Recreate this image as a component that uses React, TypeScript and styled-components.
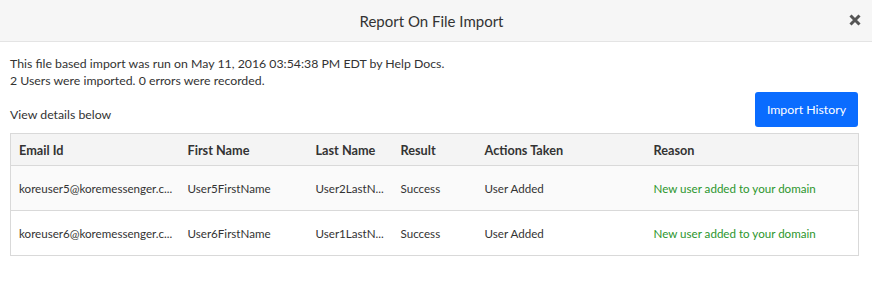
import styled, { createGlobalStyle } from "styled-components";

const GlobalStyle = createGlobalStyle`
  body {
    margin: 0;
    background: #fff;
    font-family: Lato, "Open Sans", sans-serif;
    color: #333;
  }
`;

const Modal = styled.div`
  width: 872px;
  height: 290px;
  background: #fff;
`;

const Header = styled.div`
  position: relative;
  height: 41px;
  background: #f6f6f6;
  border-bottom: 1px solid #e4e4e4;
  display: flex;
  align-items: center;
  justify-content: center;
`;

const Title = styled.div`
  font-size: 15px;
  color: #333;
  padding-right: 9px;
`;

const Close = styled.button`
  position: absolute;
  right: 10px;
  top: 13px;
  width: 14px;
  height: 14px;
  border: 0;
  padding: 0;
  background: none;
  cursor: pointer;
`;

const Body = styled.div`
  padding: 13px 14px 0 10px;
  font-size: 12.3px;
`;

const Info = styled.div`
  line-height: 17px;
`;

const Toolbar = styled.div`
  display: flex;
  justify-content: space-between;
  align-items: flex-end;
  margin-top: 3px;
`;

const Label = styled.div`
  line-height: 17px;
  padding-bottom: 4px;
`;

const Button = styled.button`
  background: #0a6cff;
  color: #fff;
  border: 0;
  border-radius: 3px;
  font-family: inherit;
  font-size: 12.3px;
  height: 35px;
  padding: 0 12px;
`;

const Table = styled.table`
  margin-top: 6px;
  width: 848px;
  border-collapse: collapse;
  table-layout: fixed;
  border: 1px solid #d9d9d9;
`;

const Th = styled.th`
  text-align: left;
  font-weight: 700;
  font-size: 12.7px;
  height: 31px;
  padding: 0 8px;
  background: #f4f4f4;
  border-bottom: 1px solid #d9d9d9;
`;

const Row = styled.tr<{ $shade?: boolean }>`
  background: ${(p) => (p.$shade ? "#fafafa" : "#fff")};
  border-bottom: 1px solid #d9d9d9;
`;

const Td = styled.td<{ $ok?: boolean }>`
  height: 44px;
  padding: 0 8px;
  font-size: 11.6px;
  color: ${(p) => (p.$ok ? "#2c962c" : "#333")};
  white-space: nowrap;
`;

const columns = [
  { name: "Email Id", width: 169 },
  { name: "First Name", width: 128 },
  { name: "Last Name", width: 85 },
  { name: "Result", width: 84 },
  { name: "Actions Taken", width: 169 },
  { name: "Reason", width: 213 },
];

const rows = [
  ["koreuser5@koremessenger.c...", "User5FirstName", "User2LastN...", "Success", "User Added", "New user added to your domain"],
  ["koreuser6@koremessenger.c...", "User6FirstName", "User1LastN...", "Success", "User Added", "New user added to your domain"],
];

export default function App() {
  return (
    <Modal>
      <GlobalStyle />
      <Header>
        <Title>Report On File Import</Title>
        <Close aria-label="close">
          <svg width="14" height="14" viewBox="0 0 14 14">
            <path d="M2.5 2.5 L11.5 11.5 M11.5 2.5 L2.5 11.5" stroke="#555" strokeWidth="3" />
          </svg>
        </Close>
      </Header>
      <Body>
        <Info>This file based import was run on May 11, 2016 03:54:38 PM EDT by Help Docs.</Info>
        <Info>2 Users were imported. 0 errors were recorded.</Info>
        <Toolbar>
          <Label>View details below</Label>
          <Button>Import History</Button>
        </Toolbar>
        <Table>
          <colgroup>
            {columns.map((c) => (
              <col key={c.name} style={{ width: c.width }} />
            ))}
          </colgroup>
          <thead>
            <tr>
              {columns.map((c) => (
                <Th key={c.name}>{c.name}</Th>
              ))}
            </tr>
          </thead>
          <tbody>
            {rows.map((r, i) => (
              <Row key={i} $shade={i === 0}>
                {r.map((v, j) => (
                  <Td key={j} $ok={j === 5}>
                    {v}
                  </Td>
                ))}
              </Row>
            ))}
          </tbody>
        </Table>
      </Body>
    </Modal>
  );
}
